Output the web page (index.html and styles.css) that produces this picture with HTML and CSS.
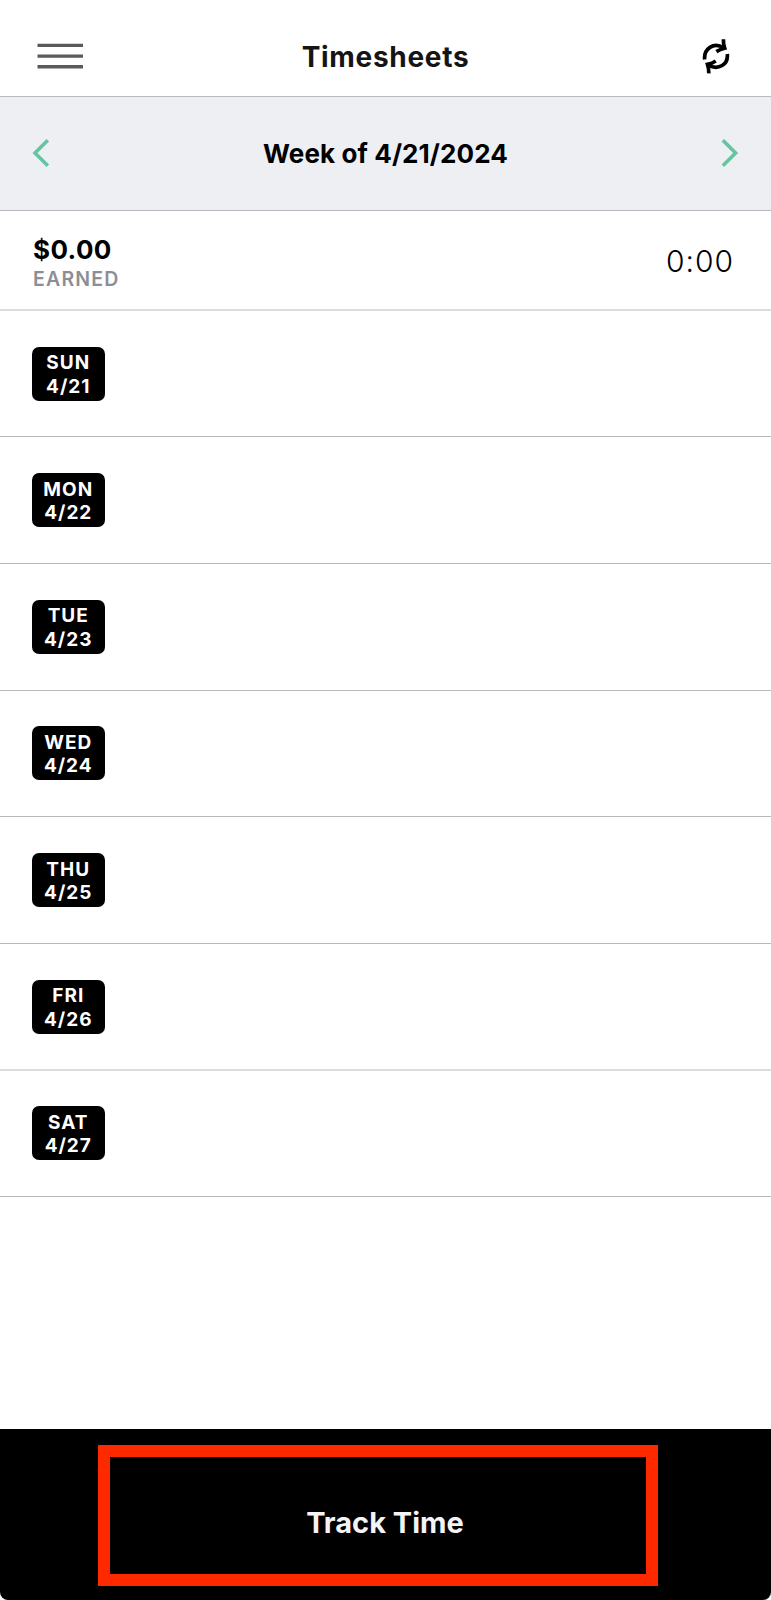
FILE: index.html
```html
<!DOCTYPE html>
<html lang="en">
<head>
    <meta charset="UTF-8">
    <meta name="viewport" content="width=device-width, initial-scale=1.0">
    <title>Timesheets</title>
    <link rel="stylesheet" href="styles.css">
</head>
<body>
    <header class="top-bar">
        <button class="icon-btn" aria-label="Menu">
            <svg class="menu-icon" width="48" height="28" viewBox="0 0 48 28">
                <path d="M1.5 3.4h45.5M1.5 14.1h45.5M1.5 24.8h45.5" />
            </svg>
        </button>
        <h1 class="title">Timesheets</h1>
        <button class="icon-btn refresh-btn" aria-label="Refresh">
            <svg class="refresh-icon" width="28" height="38" viewBox="0 0 28 38">
                <path d="M2.7 22.5C1.6 12 11.5 4.5 21.6 10.8" />
                <path d="M21.4 2.2C21.3 5 21.8 8.6 22.7 11.2C19.4 11.9 16.8 13 14.4 14.6" />
                <path d="M25.3 17C26.4 27.5 16.5 33.5 6.4 28.2" />
                <path d="M6.8 36.4C6.9 33.6 6.4 30 5.5 27.4C8.8 26.7 11.4 25.6 13.8 24" />
            </svg>
        </button>
    </header>

    <nav class="week-bar">
        <button class="icon-btn" aria-label="Previous week">
            <svg class="chevron" width="18" height="30" viewBox="0 0 18 30">
                <path d="M15.8 1.2L3 14L15.8 26.8" />
            </svg>
        </button>
        <h2 class="week">Week of 4/21/2024</h2>
        <button class="icon-btn" aria-label="Next week">
            <svg class="chevron" width="18" height="30" viewBox="0 0 18 30">
                <path d="M1.8 1.2L14.6 14L1.8 26.8" />
            </svg>
        </button>
    </nav>

    <section class="summary">
        <div class="earned">
            <p class="amount">$0.00</p>
            <p class="label">EARNED</p>
        </div>
        <p class="total">0:00</p>
    </section>

    <ul class="days">
        <li class="day"><div class="badge"><span>SUN</span><span>4/21</span></div></li>
        <li class="day"><div class="badge"><span>MON</span><span>4/22</span></div></li>
        <li class="day"><div class="badge"><span>TUE</span><span>4/23</span></div></li>
        <li class="day"><div class="badge"><span>WED</span><span>4/24</span></div></li>
        <li class="day"><div class="badge"><span>THU</span><span>4/25</span></div></li>
        <li class="day soft"><div class="badge"><span>FRI</span><span>4/26</span></div></li>
        <li class="day"><div class="badge"><span>SAT</span><span>4/27</span></div></li>
    </ul>

    <footer class="bottom-bar">
        <button class="track-btn">Track Time</button>
    </footer>
</body>
</html>
```
FILE: styles.css
```css
* {
    margin: 0;
    padding: 0;
    box-sizing: border-box;
}

body {
    display: flex;
    flex-direction: column;
    height: 1600px;
    background: #fff;
    color: #000;
    font-family: Inter, "Liberation Sans", sans-serif;
    overflow: hidden;
}

button {
    border: none;
    background: none;
    color: inherit;
    font-family: inherit;
    cursor: pointer;
}

.icon-btn {
    display: flex;
}

svg {
    fill: none;
}

/* Header */
.top-bar {
    display: flex;
    justify-content: space-between;
    align-items: center;
    height: 97px;
    padding: 16px 41px 0 36px;
    border-bottom: 1px solid #b9babe;
}

.menu-icon {
    stroke: #5a5a5a;
    stroke-width: 3.4;
}

.refresh-btn {
    width: 43px;
    justify-content: flex-end;
}

.refresh-icon {
    stroke: #000;
    stroke-width: 3.7;
}

.title {
    padding-top: 2px;
    font-size: 28px;
    font-weight: 700;
    letter-spacing: 0.7px;
    color: #151515;
}

/* Week switcher */
.week-bar {
    display: flex;
    justify-content: space-between;
    align-items: center;
    height: 114px;
    padding: 0 32px;
    border-bottom: 1px solid #b9babe;
    background: #edeff3;
}

.chevron {
    stroke: #66c5a1;
    stroke-width: 3.6;
}

.week {
    font-size: 26px;
    font-weight: 700;
    letter-spacing: 0.1px;
}

/* Earned / hours */
.summary {
    display: flex;
    justify-content: space-between;
    align-items: center;
    height: 99.8px;
    padding: 4px 37px 0 33px;
    border-bottom: 2px solid #dcdcdd;
}

.earned {
    padding-top: 4px;
}

.amount {
    font-size: 26px;
    font-weight: 700;
    line-height: 30px;
    letter-spacing: 0.4px;
}

.label {
    font-size: 19.5px;
    font-weight: 600;
    line-height: 28px;
    letter-spacing: 1.2px;
    color: #8b8e94;
}

.total {
    padding-bottom: 2px;
    font-size: 30px;
    font-weight: 300;
    letter-spacing: 1px;
}

/* Days */
.days {
    flex: 1;
    list-style: none;
}

.day {
    display: flex;
    align-items: center;
    height: 126.6px;
    padding-left: 32px;
    border-bottom: 1px solid #b8b8ba;
}

.day.soft {
    border-color: #dcdcdd;
    box-shadow: 0 1px #dcdcdd;
}

.badge {
    display: flex;
    flex-direction: column;
    align-items: center;
    justify-content: center;
    width: 72.5px;
    height: 54px;
    padding-top: 2px;
    border-radius: 7px;
    background: #000;
    color: #fff;
    font-size: 19px;
    font-weight: 700;
    line-height: 23.4px;
    letter-spacing: 1px;
}

/* Bottom action */
.bottom-bar {
    height: 171px;
    padding: 16px 0 0 98px;
    border-radius: 0 0 8px 8px;
    background: #000;
}

.track-btn {
    width: 560px;
    height: 141px;
    padding: 14px 0 0 14px;
    border: 12px solid #ff2900;
    color: #f4f4f6;
    font-size: 29px;
    font-weight: 700;
}
```
